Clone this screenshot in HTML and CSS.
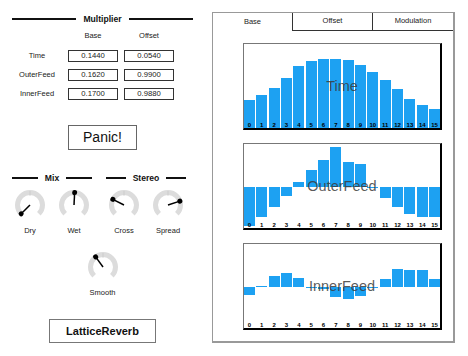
FILE: index.html
```html
<!DOCTYPE html>
<html>
<head>
<meta charset="utf-8">
<link rel="stylesheet" href="styles.css">
</head>
<body>
<div class="app">
  <div class="left">
    <div class="head"><span class="rule"></span><span class="head-text">Multiplier</span><span class="rule"></span></div>
    <div class="colheads"><span></span><span class="colhead">Base</span><span class="colhead">Offset</span></div>
    <div class="rows">
      <span class="lbl">Time</span><span class="field">0.1440</span><span class="field">0.0540</span>
      <span class="lbl">OuterFeed</span><span class="field">0.1620</span><span class="field">0.9900</span>
      <span class="lbl">InnerFeed</span><span class="field">0.1700</span><span class="field">0.9880</span>
    </div>
    <div class="btn panic">Panic!</div>
    <div class="knob-groups">
      <div class="group">
        <div class="head"><span class="rule"></span><span class="head-text">Mix</span><span class="rule"></span></div>
        <div class="knobs">
          <div class="knob">
            <svg width="36" height="34" viewBox="0 0 36 34"><path class="arc" d="M9.161 25.839 A12.5 12.5 0 1 1 26.839 25.839"/><line class="tick" x1="18" y1="3" x2="18" y2="8"/><g transform="rotate(-135 18 17)"><line class="ptr" x1="18" y1="17" x2="18" y2="4.5"/><circle class="dot" cx="18" cy="4.5" r="2.5"/></g></svg>
            <span class="klbl">Dry</span>
          </div>
          <div class="knob">
            <svg width="36" height="34" viewBox="0 0 36 34"><path class="arc" d="M9.161 25.839 A12.5 12.5 0 1 1 26.839 25.839"/><line class="tick" x1="18" y1="3" x2="18" y2="8"/><g transform="rotate(3 18 17)"><line class="ptr" x1="18" y1="17" x2="18" y2="4.5"/><circle class="dot" cx="18" cy="4.5" r="2.5"/></g></svg>
            <span class="klbl">Wet</span>
          </div>
        </div>
      </div>
      <div class="group">
        <div class="head"><span class="rule"></span><span class="head-text">Stereo</span><span class="rule"></span></div>
        <div class="knobs">
          <div class="knob">
            <svg width="36" height="34" viewBox="0 0 36 34"><path class="arc" d="M9.161 25.839 A12.5 12.5 0 1 1 26.839 25.839"/><line class="tick" x1="18" y1="3" x2="18" y2="8"/><g transform="rotate(-63 18 17)"><line class="ptr" x1="18" y1="17" x2="18" y2="4.5"/><circle class="dot" cx="18" cy="4.5" r="2.5"/></g></svg>
            <span class="klbl">Cross</span>
          </div>
          <div class="knob">
            <svg width="36" height="34" viewBox="0 0 36 34"><path class="arc" d="M9.161 25.839 A12.5 12.5 0 1 1 26.839 25.839"/><line class="tick" x1="18" y1="3" x2="18" y2="8"/><g transform="rotate(72 18 17)"><line class="ptr" x1="18" y1="17" x2="18" y2="4.5"/><circle class="dot" cx="18" cy="4.5" r="2.5"/></g></svg>
            <span class="klbl">Spread</span>
          </div>
        </div>
      </div>
    </div>
    <div class="knob smooth">
      <svg width="36" height="34" viewBox="0 0 36 34"><path class="arc" d="M9.161 25.839 A12.5 12.5 0 1 1 26.839 25.839"/><line class="tick" x1="18" y1="3" x2="18" y2="8"/><g transform="rotate(-36 18 17)"><line class="ptr" x1="18" y1="17" x2="18" y2="4.5"/><circle class="dot" cx="18" cy="4.5" r="2.5"/></g></svg>
      <span class="klbl">Smooth</span>
    </div>
    <div class="btn title-btn">LatticeReverb</div>
  </div>

  <div class="panel">
    <div class="tabs">
      <div class="tab active">Base</div>
      <div class="tab">Offset</div>
      <div class="tab last">Modulation</div>
    </div>
    <div class="charts">
      <div class="chart">
        <div class="bars">
          <div class="slot"><div class="bar up" style="height:28px"></div><span class="blbl">0</span></div>
          <div class="slot"><div class="bar up" style="height:33px"></div><span class="blbl">1</span></div>
          <div class="slot"><div class="bar up" style="height:40px"></div><span class="blbl">2</span></div>
          <div class="slot"><div class="bar up" style="height:50px"></div><span class="blbl">3</span></div>
          <div class="slot"><div class="bar up" style="height:62px"></div><span class="blbl">4</span></div>
          <div class="slot"><div class="bar up" style="height:67px"></div><span class="blbl">5</span></div>
          <div class="slot"><div class="bar up" style="height:69px"></div><span class="blbl">6</span></div>
          <div class="slot"><div class="bar up" style="height:69px"></div><span class="blbl">7</span></div>
          <div class="slot"><div class="bar up" style="height:68.5px"></div><span class="blbl">8</span></div>
          <div class="slot"><div class="bar up" style="height:63px"></div><span class="blbl">9</span></div>
          <div class="slot"><div class="bar up" style="height:56px"></div><span class="blbl">10</span></div>
          <div class="slot"><div class="bar up" style="height:48px"></div><span class="blbl">11</span></div>
          <div class="slot"><div class="bar up" style="height:39px"></div><span class="blbl">12</span></div>
          <div class="slot"><div class="bar up" style="height:29px"></div><span class="blbl">13</span></div>
          <div class="slot"><div class="bar up" style="height:23px"></div><span class="blbl">14</span></div>
          <div class="slot"><div class="bar up" style="height:19px"></div><span class="blbl">15</span></div>
        </div>
        <div class="chart-title">Time</div>
      </div>
      <div class="chart">
        <div class="bars">
          <div class="slot"><div class="bar" style="top:43px;height:38.7px"></div><span class="blbl">0</span></div>
          <div class="slot"><div class="bar" style="top:43px;height:30px"></div><span class="blbl">1</span></div>
          <div class="slot"><div class="bar" style="top:43px;height:20px"></div><span class="blbl">2</span></div>
          <div class="slot"><div class="bar" style="top:43px;height:8.7px"></div><span class="blbl">3</span></div>
          <div class="slot"><div class="bar" style="top:37.7px;height:5.3px"></div><span class="blbl">4</span></div>
          <div class="slot"><div class="bar" style="top:26px;height:17px"></div><span class="blbl">5</span></div>
          <div class="slot"><div class="bar" style="top:16px;height:27px"></div><span class="blbl">6</span></div>
          <div class="slot"><div class="bar" style="top:3.3px;height:39.7px"></div><span class="blbl">7</span></div>
          <div class="slot"><div class="bar" style="top:18.3px;height:24.7px"></div><span class="blbl">8</span></div>
          <div class="slot"><div class="bar" style="top:19.7px;height:23.3px"></div><span class="blbl">9</span></div>
          <div class="slot"><div class="bar" style="top:42.5px;height:1px"></div><span class="blbl">10</span></div>
          <div class="slot"><div class="bar" style="top:43px;height:10.7px"></div><span class="blbl">11</span></div>
          <div class="slot"><div class="bar" style="top:43px;height:20px"></div><span class="blbl">12</span></div>
          <div class="slot"><div class="bar" style="top:43px;height:27.3px"></div><span class="blbl">13</span></div>
          <div class="slot"><div class="bar" style="top:43px;height:30.3px"></div><span class="blbl">14</span></div>
          <div class="slot"><div class="bar" style="top:43px;height:30.3px"></div><span class="blbl">15</span></div>
        </div>
        <div class="chart-title">OuterFeed</div>
      </div>
      <div class="chart">
        <div class="bars">
          <div class="slot"><div class="bar" style="top:43px;height:8.3px"></div><span class="blbl">0</span></div>
          <div class="slot"><div class="bar" style="top:42px;height:1px"></div><span class="blbl">1</span></div>
          <div class="slot"><div class="bar" style="top:32.3px;height:10.7px"></div><span class="blbl">2</span></div>
          <div class="slot"><div class="bar" style="top:29px;height:14px"></div><span class="blbl">3</span></div>
          <div class="slot"><div class="bar" style="top:34.3px;height:8.7px"></div><span class="blbl">4</span></div>
          <div class="slot"><div class="bar" style="top:43px;height:1px"></div><span class="blbl">5</span></div>
          <div class="slot"><div class="bar" style="top:43px;height:2.3px"></div><span class="blbl">6</span></div>
          <div class="slot"><div class="bar" style="top:43px;height:9.7px"></div><span class="blbl">7</span></div>
          <div class="slot"><div class="bar" style="top:43px;height:11.7px"></div><span class="blbl">8</span></div>
          <div class="slot"><div class="bar" style="top:43px;height:9.3px"></div><span class="blbl">9</span></div>
          <div class="slot"><div class="bar" style="top:42.5px;height:1px"></div><span class="blbl">10</span></div>
          <div class="slot"><div class="bar" style="top:35.3px;height:7.7px"></div><span class="blbl">11</span></div>
          <div class="slot"><div class="bar" style="top:24.7px;height:18.3px"></div><span class="blbl">12</span></div>
          <div class="slot"><div class="bar" style="top:26px;height:17px"></div><span class="blbl">13</span></div>
          <div class="slot"><div class="bar" style="top:26px;height:17px"></div><span class="blbl">14</span></div>
          <div class="slot"><div class="bar" style="top:34.7px;height:8.3px"></div><span class="blbl">15</span></div>
        </div>
        <div class="chart-title">InnerFeed</div>
      </div>
    </div>
  </div>
</div>
</body>
</html>
```
FILE: styles.css
```css
* { box-sizing: border-box; margin: 0; padding: 0; }
html, body { width: 468px; height: 356px; background: #fff; overflow: hidden; }
body { font-family: "Liberation Sans", Arial, sans-serif; color: #222; }

.app { display: flex; padding-top: 12px; }

.left { width: 181px; margin-left: 12px; display: flex; flex-direction: column; }

.head { display: flex; align-items: center; gap: 7px; height: 14px; }
.rule { flex: 1; height: 2px; background: #111; }
.head-text { font-weight: bold; font-size: 8.6px; line-height: 14px; color: #111; }

.colheads, .rows {
  display: grid;
  grid-template-columns: 50px 50px 50px;
  column-gap: 6px;
}
.colheads { margin-top: 5px; height: 10px; }
.colhead { font-size: 7.5px; line-height: 10px; text-align: center; }
.rows { margin-top: 9px; row-gap: 7px; grid-auto-rows: 12px; }
.lbl { font-size: 7.5px; line-height: 12px; text-align: center; }
.field {
  border: 1px solid #333;
  font-size: 7.7px;
  line-height: 10px;
  text-align: center;
  color: #222;
}

.btn { align-self: center; border: 1px solid #666; text-align: center; color: #111; }
.panic { margin-top: 25px; width: 69px; height: 25px; font-size: 14px; line-height: 23px; }

.knob-groups { margin-top: 22px; display: flex; gap: 14px; }
.group { width: 80px; display: flex; flex-direction: column; }
.group .head { height: 12px; }
.group .head-text { line-height: 12px; }
.knobs { display: flex; gap: 8px; margin-top: 4px; }
.knob { width: 36px; display: flex; flex-direction: column; align-items: center; }
.knob svg { display: block; }
.klbl { margin-top: 4px; font-size: 7.5px; line-height: 9px; }
.smooth { align-self: center; margin-top: 15px; }

.arc { fill: none; stroke: #dcdcdc; stroke-width: 5; }
.tick { stroke: #c4c4c4; stroke-width: 0.6; }
.ptr { stroke: #000; stroke-width: 1.5; }
.dot { fill: #000; }

.title-btn {
  margin-top: 22px;
  width: 107px;
  height: 24px;
  border-color: #777;
  font-weight: bold;
  font-size: 11px;
  line-height: 22px;
}

.panel {
  margin-left: 19px;
  width: 243px;
  height: 331px;
  border: 1px solid #999;
  border-right-width: 2px;
  border-bottom-width: 2px;
  display: flex;
  flex-direction: column;
}
.tabs { display: flex; height: 18px; }
.tab {
  font-size: 7.5px;
  line-height: 16px;
  text-align: center;
  width: 80px;
  border-left: 1.5px solid #333;
  border-bottom: 1.5px solid #333;
  color: #222;
}
.tab.active { width: 79px; border: none; line-height: 17px; }
.tab.last { width: 81px; }

.charts {
  padding: 12px 0 0 30px;
  display: flex;
  flex-direction: column;
  gap: 13px;
}
.chart {
  position: relative;
  width: 199px;
  height: 87px;
  border-top: 1px solid #777;
  border-left: 1px solid #777;
  border-right: 2px solid #000;
  border-bottom: 2px solid #000;
}
.bars { display: flex; gap: 1.5px; height: 100%; }
.slot { position: relative; flex: 1; height: 100%; }
.bar { position: absolute; left: 0; right: 0; background: #1da1f2; }
.bar.up { bottom: 0; }
.blbl {
  position: absolute;
  left: -1px;
  right: -1px;
  bottom: 0.5px;
  text-align: center;
  font-size: 6px;
  line-height: 6px;
  font-weight: bold;
  color: #000;
}
.chart-title {
  position: absolute;
  inset: 0;
  display: flex;
  align-items: center;
  justify-content: center;
  font-size: 14.5px;
  color: rgba(60, 60, 60, 0.85);
}
```
